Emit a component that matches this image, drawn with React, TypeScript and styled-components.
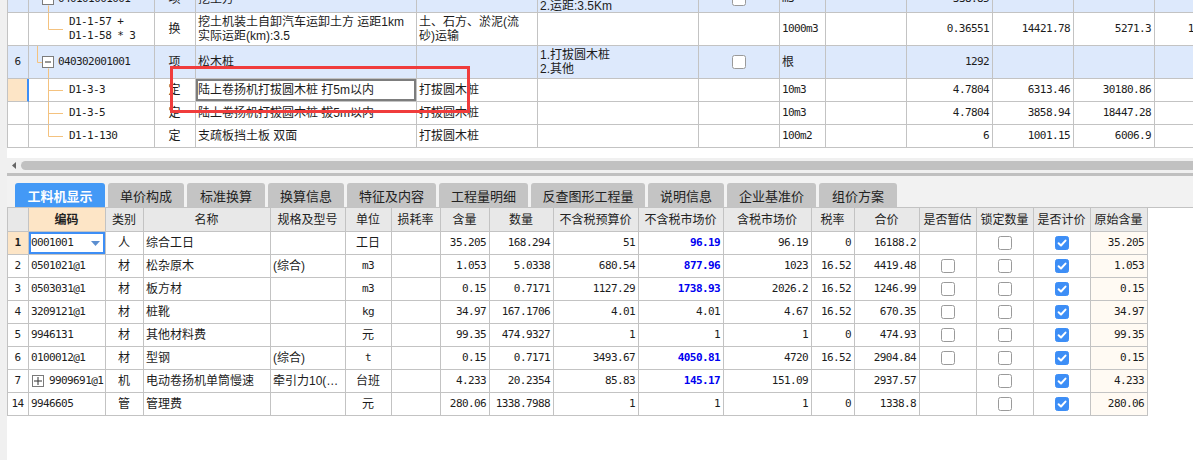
import React from "react";
import styled, { createGlobalStyle } from "styled-components";

const GlobalStyle = createGlobalStyle`
  * { box-sizing: border-box; }
  html, body { margin: 0; padding: 0; background: #fff; }
  body {
    font-family: "Liberation Sans", "Noto Sans CJK SC", sans-serif;
    font-size: 12px;
    color: #1c1c1c;
  }
`;

const LINE = "#c3c3c3";
const TINT = "#dde9fc";
const PEACH = "#fde5c6";
const BLUE = "#3d8ef6";
const TREE = "#f4c27f";
const MONO = `"DejaVu Sans Mono", "Liberation Mono", monospace`;

const isAscii = (s: string) => /^[\x00-\x7f]*$/.test(s);

const Frame = styled.div`
  display: flex;
  width: 1193px;
  height: 460px;
  overflow: hidden;
  background: #fff;
`;

const Gutter = styled.div`
  flex: none;
  width: 7px;
  background: #f0f0f0;
`;

const Main = styled.div`
  flex: 1;
  min-width: 0;
  display: flex;
  flex-direction: column;
  overflow: hidden;
`;

// upper grid (清单 / 定额)
const UpperPane = styled.div`
  position: relative;
  flex: none;
  height: 158px;
  overflow: hidden;
`;

const UpperGrid = styled.div`
  width: max-content;
  margin-top: -14px;
  border-left: 1px solid ${LINE};
`;

const UPPER_COLS =
  "21px 126px 41px 221px 121px 161px 81px 46px 81px 86px 81px 81px 85px";

const URow = styled.div<{ $h: number; $tint?: boolean }>`
  display: grid;
  grid-template-columns: ${UPPER_COLS};
  height: ${(p) => p.$h}px;
  background: ${(p) => (p.$tint ? TINT : "#fff")};
`;

type Align = "left" | "center" | "right";
const justify: Record<Align, string> = {
  left: "flex-start",
  center: "center",
  right: "flex-end",
};

const Cell = styled.div<{
  $align?: Align;
  $bg?: string;
  $ring?: string;
  $edge?: string;
  $flush?: boolean;
  $bold?: boolean;
  $num?: boolean;
}>`
  display: flex;
  align-items: center;
  justify-content: ${(p) => justify[p.$align ?? "left"]};
  text-align: ${(p) => p.$align ?? "left"};
  padding: ${(p) => (p.$flush ? "0" : "0 3px 0 2px")};
  border-right: ${(p) => (p.$edge ? `2px solid ${p.$edge}` : `1px solid ${LINE}`)};
  border-bottom: 1px solid ${LINE};
  background: ${(p) => p.$bg ?? "transparent"};
  box-shadow: ${(p) => (p.$ring ? `inset 0 0 0 2px ${p.$ring}` : "none")};
  font-weight: ${(p) => (p.$bold ? 700 : 400)};
  font-family: ${(p) => (p.$num ? MONO : "inherit")};
  font-size: ${(p) => (p.$num ? "11px" : "12px")};
  letter-spacing: ${(p) => (p.$num ? "-0.6px" : "normal")};
  white-space: pre;
  line-height: 14px;
  overflow: hidden;
  min-width: 0;
`;

const CodeText = styled.span`
  font-family: ${MONO};
  font-size: 11px;
  letter-spacing: -0.6px;
  white-space: pre;
  line-height: 14px;
`;

const Annotation = styled.div`
  position: absolute;
  left: 163px;
  top: 66px;
  width: 300px;
  height: 47px;
  border: 3px solid #f03c3c;
  pointer-events: none;
`;

const HScroll = styled.div`
  flex: none;
  height: 14px;
  display: flex;
  align-items: center;
  gap: 5px;
  padding-left: 5px;
  background: #f0f0f0;
`;

const Thumb = styled.div`
  flex: 1;
  height: 9px;
  margin-right: -10px;
  border-radius: 5px;
  background: #c1c1c1;
`;

const Splitter = styled.div`
  flex: none;
  height: 4px;
  border-top: 1px solid #f0f0f0;
  background: #c0c0c0;
`;

// tabs
const TabBar = styled.div`
  flex: none;
  height: 32px;
  display: flex;
  align-items: flex-end;
  gap: 3px;
  padding-left: 8px;
  background: #f2f2f2;
  border-bottom: 1px solid ${LINE};
`;

const Tab = styled.div<{ $w: number; $active?: boolean }>`
  width: ${(p) => p.$w}px;
  height: 24px;
  display: flex;
  align-items: center;
  justify-content: center;
  border-radius: 3px 3px 0 0;
  font-size: 13px;
  background: ${(p) => (p.$active ? "#4399f6" : "#c4c4c4")};
  color: ${(p) => (p.$active ? "#fff" : "#222")};
  font-weight: ${(p) => (p.$active ? 700 : 400)};
`;

// lower grid (工料机)
const LOWER_COLS =
  "21px 77px 38px 127px 75px 46px 49px 49px 64px 85px 85px 88px 43px 65px 57px 57px 57px 57px";

const LowerGrid = styled.div`
  width: max-content;
  border-left: 1px solid ${LINE};
`;

const LRow = styled.div<{ $head?: boolean }>`
  display: grid;
  grid-template-columns: ${LOWER_COLS};
  height: ${(p) => (p.$head ? 24 : 23)}px;
`;

const HeadCell = styled(Cell)`
  justify-content: center;
  background: ${(p) => p.$bg ?? "#e8e8e8"};
  color: #222;
`;

const Num = styled.span<{ $strong?: boolean }>`
  color: ${(p) => (p.$strong ? "#0000f0" : "inherit")};
  font-weight: ${(p) => (p.$strong ? 700 : 400)};
`;

const ExpandBox = styled.span`
  flex: none;
  width: 12px;
  height: 12px;
  margin: 0 5px 0 1px;
  border: 1px solid #7a7a7a;
  display: flex;
  align-items: center;
  justify-content: center;
  background: #fff;
`;

type TreeKind = "parentTop" | "leafLast" | "parentLast" | "child" | "childLast";

function Tree({ kind, h }: { kind: TreeKind; h: number }) {
  const ch = h - 1;
  const mid = Math.floor(ch / 2) + 0.5;
  const parent = kind === "parentTop" || kind === "parentLast";
  const w = parent ? 27 : 38;
  return (
    <svg width={w} height={ch} style={{ flex: "none", marginRight: 2 }}>
      {parent && (
        <>
          <line x1={8.5} y1={0} x2={8.5} y2={mid} stroke={TREE} />
          <line x1={8.5} y1={mid} x2={13} y2={mid} stroke={TREE} />
          <line x1={19.5} y1={mid + 6} x2={19.5} y2={ch} stroke={TREE} />
          <rect x={13.5} y={mid - 6} width={11} height={11} fill="#fff" stroke="#7c7c7c" />
          <line x1={16} y1={mid - 0.5} x2={22} y2={mid - 0.5} stroke="#333" />
        </>
      )}
      {!parent && (
        <>
          <line
            x1={19.5}
            y1={0}
            x2={19.5}
            y2={kind === "child" ? ch : mid}
            stroke={TREE}
          />
          <line x1={19.5} y1={mid} x2={34} y2={mid} stroke={TREE} />
        </>
      )}
    </svg>
  );
}

function Checkbox({ on }: { on?: boolean }) {
  return (
    <svg width={14} height={14}>
      <rect
        x={0.5}
        y={0.5}
        width={13}
        height={13}
        rx={2}
        fill={on ? BLUE : "#fff"}
        stroke={on ? BLUE : "#9a9a9a"}
      />
      {on && (
        <path
          d="M3.6 7.2 L6 9.5 L10.5 4.6"
          stroke="#fff"
          strokeWidth={2}
          fill="none"
          strokeLinecap="round"
          strokeLinejoin="round"
        />
      )}
    </svg>
  );
}

type UpperRowData = {
  h: number;
  tint?: boolean;
  current?: boolean;
  no?: string;
  tree: TreeKind;
  code: string;
  kind: string;
  name: string;
  work?: string;
  feature?: string;
  box?: boolean;
  unit: string;
  qty: string;
  price?: string;
  total?: string;
  extra?: string;
};

const upperRows: UpperRowData[] = [
  { h: 27, tint: true, tree: "parentTop", code: "040101001001", kind: "项", name: "挖土方", feature: "1.土壤类别:综合\n2.运距:3.5Km", box: true, unit: "m3", qty: "338.85" },
  { h: 33, tree: "leafLast", code: "D1-1-57 +\nD1-1-58 * 3", kind: "换", name: "挖土机装土自卸汽车运卸土方 运距1km\n实际运距(km):3.5", work: "土、石方、淤泥(流\n砂)运输", unit: "1000m3", qty: "0.36551", price: "14421.78", total: "5271.3", extra: "16251.45" },
  { h: 33, tint: true, no: "6", tree: "parentLast", code: "040302001001", kind: "项", name: "松木桩", feature: "1.打拔圆木桩\n2.其他", box: true, unit: "根", qty: "1292" },
  { h: 23, current: true, tree: "child", code: "D1-3-3", kind: "定", name: "陆上卷扬机打拔圆木桩 打5m以内", work: "打拔圆木桩", unit: "10m3", qty: "4.7804", price: "6313.46", total: "30180.86" },
  { h: 23, tree: "child", code: "D1-3-5", kind: "定", name: "陆上卷扬机打拔圆木桩 拔5m以内", work: "打拔圆木桩", unit: "10m3", qty: "4.7804", price: "3858.94", total: "18447.28" },
  { h: 23, tree: "childLast", code: "D1-1-130", kind: "定", name: "支疏板挡土板 双面", work: "打拔圆木桩", unit: "100m2", qty: "6", price: "1001.15", total: "6006.9" },
];

type LowerRowData = {
  no: string;
  code: string;
  expand?: boolean;
  kind: string;
  name: string;
  spec: string;
  unit: string;
  qty: string;
  amount: string;
  budget: string;
  market: string;
  strong?: boolean;
  taxed: string;
  rate: string;
  total: string;
  est: boolean | null;
  orig: string;
};

const lowerRows: LowerRowData[] = [
  { no: "1", code: "0001001", kind: "人", name: "综合工日", spec: "", unit: "工日", qty: "35.205", amount: "168.294", budget: "51", market: "96.19", strong: true, taxed: "96.19", rate: "0", total: "16188.2", est: null, orig: "35.205" },
  { no: "2", code: "0501021@1", kind: "材", name: "松杂原木", spec: "(综合)", unit: "m3", qty: "1.053", amount: "5.0338", budget: "680.54", market: "877.96", strong: true, taxed: "1023", rate: "16.52", total: "4419.48", est: false, orig: "1.053" },
  { no: "3", code: "0503031@1", kind: "材", name: "板方材", spec: "", unit: "m3", qty: "0.15", amount: "0.7171", budget: "1127.29", market: "1738.93", strong: true, taxed: "2026.2", rate: "16.52", total: "1246.99", est: false, orig: "0.15" },
  { no: "4", code: "3209121@1", kind: "材", name: "桩靴", spec: "", unit: "kg", qty: "34.97", amount: "167.1706", budget: "4.01", market: "4.01", taxed: "4.67", rate: "16.52", total: "670.35", est: false, orig: "34.97" },
  { no: "5", code: "9946131", kind: "材", name: "其他材料费", spec: "", unit: "元", qty: "99.35", amount: "474.9327", budget: "1", market: "1", taxed: "1", rate: "0", total: "474.93", est: false, orig: "99.35" },
  { no: "6", code: "0100012@1", kind: "材", name: "型钢", spec: "(综合)", unit: "t", qty: "0.15", amount: "0.7171", budget: "3493.67", market: "4050.81", strong: true, taxed: "4720", rate: "16.52", total: "2904.84", est: false, orig: "0.15" },
  { no: "7", code: "9909691@1", expand: true, kind: "机", name: "电动卷扬机单筒慢速", spec: "牵引力10(…", unit: "台班", qty: "4.233", amount: "20.2354", budget: "85.83", market: "145.17", strong: true, taxed: "151.09", rate: "", total: "2937.57", est: null, orig: "4.233" },
  { no: "14", code: "9946605", kind: "管", name: "管理费", spec: "", unit: "元", qty: "280.06", amount: "1338.7988", budget: "1", market: "1", taxed: "1", rate: "0", total: "1338.8", est: null, orig: "280.06" },
];

const tabs = [
  { label: "工料机显示", w: 90 },
  { label: "单价构成", w: 76 },
  { label: "标准换算", w: 78 },
  { label: "换算信息", w: 76 },
  { label: "特征及内容", w: 89 },
  { label: "工程量明细", w: 89 },
  { label: "反查图形工程量", w: 114 },
  { label: "说明信息", w: 76 },
  { label: "企业基准价", w: 89 },
  { label: "组价方案", w: 78 },
];

const headers = [
  "", "编码", "类别", "名称", "规格及型号", "单位", "损耗率", "含量", "数量",
  "不含税预算价", "不含税市场价", "含税市场价", "税率", "合价",
  "是否暂估", "锁定数量", "是否计价", "原始含量",
];

const App = () => {
  return (
    <>
      <GlobalStyle />
      <Frame>
        <Gutter />
        <Main>
          <UpperPane>
            <UpperGrid>
              {upperRows.map((r, i) => (
                <URow key={i} $h={r.h} $tint={r.tint}>
                  <Cell
                    $num
                    $align="center"
                    $bg={r.current ? PEACH : undefined}
                    $edge={r.current ? BLUE : undefined}
                  >
                    {r.no}
                  </Cell>
                  <Cell $flush>
                    <Tree kind={r.tree} h={r.h} />
                    <CodeText>{r.code}</CodeText>
                  </Cell>
                  <Cell $align="center">{r.kind}</Cell>
                  <Cell $ring={r.current ? "#7d7d7d" : undefined}>{r.name}</Cell>
                  <Cell>{r.work}</Cell>
                  <Cell>{r.feature}</Cell>
                  <Cell $align="center">{r.box && <Checkbox />}</Cell>
                  <Cell $num={isAscii(r.unit)}>{r.unit}</Cell>
                  <Cell />
                  <Cell $num $align="right">{r.qty}</Cell>
                  <Cell $num $align="right">{r.price}</Cell>
                  <Cell $num $align="right">{r.total}</Cell>
                  <Cell $num $align="right">{r.extra}</Cell>
                </URow>
              ))}
            </UpperGrid>
            <Annotation />
          </UpperPane>

          <HScroll>
            <svg width={4} height={7} style={{ flex: "none" }}>
              <polygon points="4,0 4,7 0,3.5" fill="#666" />
            </svg>
            <Thumb />
          </HScroll>
          <Splitter />

          <TabBar>
            {tabs.map((t, i) => (
              <Tab key={t.label} $w={t.w} $active={i === 0}>
                {t.label}
              </Tab>
            ))}
          </TabBar>

          <LowerGrid>
            <LRow $head>
              {headers.map((h, i) => (
                <HeadCell key={i} $bg={i === 1 ? PEACH : undefined} $bold={i === 1}>
                  {h}
                </HeadCell>
              ))}
            </LRow>
            {lowerRows.map((r, i) => {
              const first = i === 0;
              return (
                <LRow key={r.no}>
                  <Cell $num $align="center" $bg={first ? PEACH : undefined} $bold={first}>
                    {r.no}
                  </Cell>
                  {first ? (
                    <Cell
                      $num
                      $ring={BLUE}
                      style={{ justifyContent: "space-between", paddingRight: 5 }}
                    >
                      {r.code}
                      <svg width={9} height={5}>
                        <polygon points="0,0 9,0 4.5,5" fill="#5b8ed0" />
                      </svg>
                    </Cell>
                  ) : (
                    <Cell $num>
                      {r.expand && (
                        <ExpandBox>
                          <svg width={8} height={8}>
                            <path d="M0 4 H8 M4 0 V8" stroke="#333" strokeWidth={1} />
                          </svg>
                        </ExpandBox>
                      )}
                      {r.code}
                    </Cell>
                  )}
                  <Cell $align="center">{r.kind}</Cell>
                  <Cell>{r.name}</Cell>
                  <Cell>{r.spec}</Cell>
                  <Cell $align="center" $num={isAscii(r.unit)}>
                    {r.unit}
                  </Cell>
                  <Cell />
                  <Cell $num $align="right">{r.qty}</Cell>
                  <Cell $num $align="right">{r.amount}</Cell>
                  <Cell $num $align="right">{r.budget}</Cell>
                  <Cell $num $align="right">
                    <Num $strong={r.strong}>{r.market}</Num>
                  </Cell>
                  <Cell $num $align="right">{r.taxed}</Cell>
                  <Cell $num $align="right">{r.rate}</Cell>
                  <Cell $num $align="right">{r.total}</Cell>
                  <Cell $align="center">{r.est !== null && <Checkbox />}</Cell>
                  <Cell $align="center">
                    <Checkbox />
                  </Cell>
                  <Cell $align="center">
                    <Checkbox on />
                  </Cell>
                  <Cell $num $align="right" $bg="#fffaf3">
                    {r.orig}
                  </Cell>
                </LRow>
              );
            })}
          </LowerGrid>
        </Main>
      </Frame>
    </>
  );
};

export default App;
